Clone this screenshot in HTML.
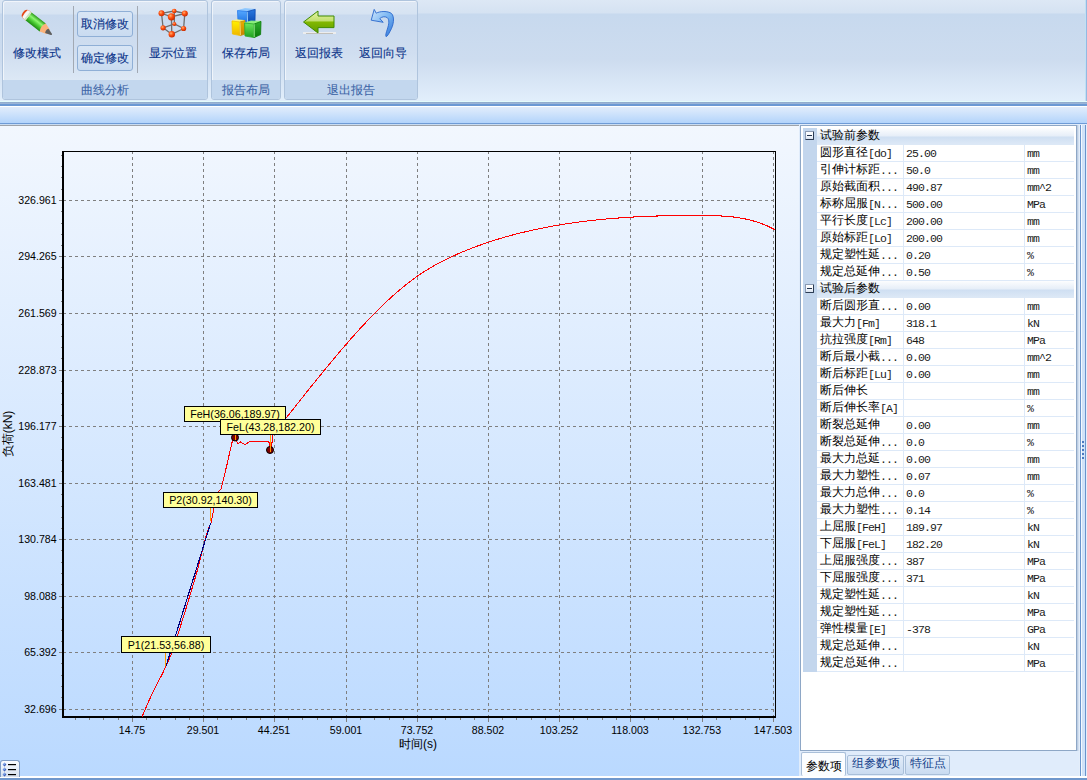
<!DOCTYPE html>
<html><head><meta charset="utf-8">
<style>
*{box-sizing:border-box}
html,body{margin:0;padding:0;width:1087px;height:780px;overflow:hidden;background:#dfe9f5;font-family:"Liberation Sans",sans-serif}
.abs{position:absolute}
#ribbon{left:0;top:0;width:1087px;height:101px;background:linear-gradient(#dde8f5 0px,#d5e2f2 13px,#c7d9ee 14px,#cddcef 60px,#e1eefb 100px)}
#ribbon:after{content:"";position:absolute;right:0;top:0;width:2px;height:101px;background:linear-gradient(90deg,#d8f4fb,#7fa5da)}
.grp{position:absolute;top:0px;height:100px;border:1px solid #afc4dd;border-radius:3px;box-shadow:inset 1px 1px 0 rgba(255,255,255,0.6);background:linear-gradient(#dde7f4 0px,#d6e3f2 13px,#c8d9ee 14px,#d0def0 52px,#dce8f5 79px)}
.grp .lbl{position:absolute;left:0;right:0;bottom:0;height:19px;background:#c3d7ee;border-radius:0 0 2px 2px;color:#3c64a6;font-size:12px;text-align:center;line-height:21px;-webkit-text-stroke:0.08px #3c64a6}
.btxt{position:absolute;color:#0d358a;font-size:12px;line-height:14px;white-space:nowrap;-webkit-text-stroke:0.12px #0d358a}
.sep{position:absolute;top:6px;width:1px;height:67px;background:#a2a9b3}
.sbtn{position:absolute;left:77px;width:56px;height:26px;border:1px solid #8fafd6;border-radius:3px;background:linear-gradient(#d9e6f5,#c9dbf0);color:#0d358a;font-size:12px;line-height:24px;text-align:center;-webkit-text-stroke:0.12px #0d358a}
#strip{left:0;top:101px;width:1087px;height:25px;background:linear-gradient(#e3fbfc 0px,#e3fbfc 1px,#8ea8c8 1px,#9fb9dd 3px,#6c99d4 3px,#6c99d4 5px,#ffffff 5px,#ffffff 6px,#e2edfc 6px,#b3d4fb 22px,#6e9bd6 22px,#6e9bd6 23px,#c9dcf2 23px)}
#chartbg{left:0;top:124px;width:799px;height:652px;border-top:1px solid #c9dcf2;box-shadow:inset 0 1px 0 #9ea3aa;background:linear-gradient(#f2f7fe 2px,#bad9ff)}
#bottom{left:0;top:776px;width:1087px;height:4px;background:linear-gradient(#ffffff 0px,#ffffff 2px,#6f97cc 2px)}
#rpanel{left:799px;top:124px;width:288px;height:652px;background:#e0ecfb}
#split{left:1077px;top:125px;width:10px;height:652px;background:linear-gradient(90deg,#e0ecfb 0,#e0ecfb 2px,#e4eefa 2px,#e4eefa 3px,#6a94cc 3px,#6a94cc 4px,#f4f9ff 4px,#f4f9ff 5px,#d0e2f8 5px,#d0e2f8 8px,#6a94cc 8px,#6a94cc 9px,#e4eefa 9px)}
#shad{left:1077px;top:125px;width:2px;height:626px;background:linear-gradient(90deg,#b2c4dc,#dde9f7)}
#grid{left:800px;top:125px;width:277px;height:626px;border:1px solid #8ea7c6;background:#fff}
.gutter{position:absolute;left:2px;top:2px;width:14px;height:544px;background:#c3d6ed}
.row{position:absolute;left:16px;width:257px;height:17px;border-bottom:1px solid #dde9f8;font-size:12px;line-height:15px;color:#000;white-space:nowrap}
.row .n{position:absolute;left:3px;top:0}
.row .v{position:absolute;left:86px;top:0;height:16px;border-left:1px solid #dde9f8;padding-left:2px;width:121px}
.row .u{position:absolute;left:207px;top:0;height:16px;border-left:1px solid #dde9f8;padding-left:2px;width:51px}
.cat{position:absolute;left:16px;width:257px;height:17px;font-size:12px;line-height:17px;background:linear-gradient(#fcfdfe,#e6eef8 8px,#cfdff2 9px,#dce8f6 16px)}
.cat span{position:absolute;left:3px;top:-1px}
.m{font-family:"Liberation Mono",monospace;font-size:11.5px;letter-spacing:-0.9px;color:#1a1a1a;position:relative;top:0.5px}
.tab{position:absolute;font-size:12px;line-height:18px;text-align:center;border:1px solid #a9bfd9;border-radius:2px}
.ex{position:absolute;left:-12px;top:3px;width:9px;height:9px;border:1px solid;border-color:#8a9ab2 #2c3c54 #2c3c54 #8a9ab2;border-radius:1px;background:linear-gradient(#ffffff,#f2f6fc 60%,#d8e2f0)}
.ex:after{content:"";position:absolute;left:1px;top:3px;width:5px;height:1px;background:#23344e}
</style></head><body>
<div id="ribbon" class="abs">
  <div class="grp" style="left:2px;width:206px"><div class="lbl">曲线分析</div></div>
  <div class="grp" style="left:211px;width:70px"><div class="lbl">报告布局</div></div>
  <div class="grp" style="left:284px;width:134px"><div class="lbl">退出报告</div></div>
  <div class="btxt" style="left:13px;top:46px">修改模式</div>
  <div class="sep" style="left:73px"></div>
  <div class="sbtn" style="top:11px">取消修改</div>
  <div class="sbtn" style="top:45px">确定修改</div>
  <div class="sep" style="left:137px"></div>
  <div class="btxt" style="left:149px;top:46px">显示位置</div>
  <div class="btxt" style="left:222px;top:46px">保存布局</div>
  <div class="btxt" style="left:295px;top:46px">返回报表</div>
  <div class="btxt" style="left:359px;top:46px">返回向导</div>
  <svg class="abs" style="left:0;top:0" width="420" height="42">
<defs>
 <linearGradient id="pg" x1="0" y1="0" x2="0" y2="1">
  <stop offset="0" stop-color="#2a9a1a"/><stop offset="0.35" stop-color="#8ef770"/><stop offset="0.6" stop-color="#52d23a"/><stop offset="1" stop-color="#1c8a10"/>
 </linearGradient>
 <radialGradient id="ball" cx="0.38" cy="0.35" r="0.7">
  <stop offset="0" stop-color="#ffb070"/><stop offset="0.45" stop-color="#ff5010"/><stop offset="1" stop-color="#c02800"/>
 </radialGradient>
 <linearGradient id="ag" x1="0" y1="0" x2="0" y2="1">
  <stop offset="0" stop-color="#e6f5a8"/><stop offset="0.45" stop-color="#c2e070"/><stop offset="0.5" stop-color="#82b800"/><stop offset="1" stop-color="#5e9c00"/>
 </linearGradient>
 <linearGradient id="ug" x1="0" y1="0" x2="1" y2="1">
  <stop offset="0" stop-color="#cfe6fc"/><stop offset="0.5" stop-color="#7ab6f2"/><stop offset="1" stop-color="#2c72d8"/>
 </linearGradient>
 <linearGradient id="bf" x1="0" y1="0" x2="0" y2="1"><stop offset="0" stop-color="#55a8ff"/><stop offset="1" stop-color="#1a6ee0"/></linearGradient>
 <linearGradient id="bs" x1="0" y1="0" x2="0" y2="1"><stop offset="0" stop-color="#2a78e0"/><stop offset="1" stop-color="#0a48b0"/></linearGradient>
 <linearGradient id="yf" x1="0" y1="0" x2="0" y2="1"><stop offset="0" stop-color="#fff200"/><stop offset="1" stop-color="#f0b400"/></linearGradient>
 <linearGradient id="ys" x1="0" y1="0" x2="0" y2="1"><stop offset="0" stop-color="#e8b000"/><stop offset="1" stop-color="#c88000"/></linearGradient>
 <linearGradient id="gf" x1="0" y1="0" x2="0" y2="1"><stop offset="0" stop-color="#6ee860"/><stop offset="1" stop-color="#1ea01e"/></linearGradient>
 <linearGradient id="gs" x1="0" y1="0" x2="0" y2="1"><stop offset="0" stop-color="#30b030"/><stop offset="1" stop-color="#087a08"/></linearGradient>
</defs>
<!-- pencil -->
<g transform="translate(25.8,14.3) rotate(38)">
 <rect x="3" y="-5" width="18.5" height="10" fill="url(#pg)"/>
 <path d="M21.5,-5 L28.5,-2.6 Q31.5,0 28.5,2.8 L21.5,5 Q18.8,0 21.5,-5 Z" fill="#fbb27a"/>
 <path d="M26.8,-2.6 L32.5,-0.8 Q34,0 32.5,1 L26.8,2.9 Q25,0 26.8,-2.6 Z" fill="#5e5e5e"/>
 <path d="M3.5,-5 L1,-5 Q-3.5,-5 -3.5,0 Q-3.5,5 1,5 L3.5,5 Z" fill="#e44a18"/>
 <path d="M-1,-4.6 L3.5,-5 L3.5,5 L-1,4.6 Q-2.2,0 -1,-4.6 Z" fill="#f6f6f6"/>
 <path d="M1.8,-5 L3.5,-5 L3.5,5 L1.8,5 Z" fill="#c8e8c0"/>
</g>
<!-- molecule cube -->
<g stroke="#6e6e6e" stroke-width="1.3" fill="none">
 <path d="M161.5,13.3 L174.2,11 L184.8,13.5 L171.4,16.8 Z"/>
 <path d="M161.5,13.3 L163.1,27.8 M184.8,13.5 L183.6,28.5 M171.4,16.8 L171.8,34.3 M174.2,11 L174.4,23.9"/>
 <path d="M163.1,27.8 L174.4,23.9 L183.6,28.5 L171.8,34.3 Z"/>
</g>
<g fill="url(#ball)">
 <circle cx="174.2" cy="11" r="2.3"/><circle cx="174.4" cy="23.9" r="2"/>
 <circle cx="161.5" cy="13.3" r="3"/><circle cx="184.8" cy="13.5" r="3"/>
 <circle cx="163.1" cy="27.8" r="2.6"/><circle cx="183.6" cy="28.5" r="2.6"/>
 <circle cx="171.4" cy="16.8" r="3.6"/><circle cx="171.8" cy="34.3" r="3.2"/>
</g>
<!-- blocks -->
<g stroke-linejoin="round">
 <path d="M237.5,10.6 L245,8.6 L255.2,9.4 L247.3,11.6 Z" fill="#8cc6ff" stroke="#8cc6ff" stroke-width="0.8"/>
 <path d="M237.5,10.6 L247.3,11.6 L247.6,23.9 L238,22.6 Z" fill="url(#bf)" stroke="#2a7ae8" stroke-width="0.8"/>
 <path d="M247.3,11.6 L255.2,9.4 L255,21.2 L247.6,23.9 Z" fill="url(#bs)" stroke="#0c48b0" stroke-width="0.8"/>
 <path d="M247.3,11.8 L247.6,23.6" stroke="#9fd2ff" stroke-width="0.9"/>
 <path d="M232,21 L237,19.8 L245,20.6 L240,22 Z" fill="#fff27a" stroke="#fff27a" stroke-width="0.8"/>
 <path d="M232,21 L240,22 L240.4,35.6 L232.4,34 Z" fill="url(#yf)" stroke="#f0c000" stroke-width="0.8"/>
 <path d="M240,22 L245,20.6 L245,34 L240.4,35.6 Z" fill="url(#ys)" stroke="#c88a00" stroke-width="0.8"/>
 <path d="M240,22.2 L240.4,35.2" stroke="#ffe98a" stroke-width="0.8"/>
 <path d="M244.6,23 L251,21 L261,21.4 L254.2,24 Z" fill="#8df07c" stroke="#8df07c" stroke-width="0.8"/>
 <path d="M244.6,23 L254.2,24 L254.2,37.6 L245,36 Z" fill="url(#gf)" stroke="#2aa82a" stroke-width="0.8"/>
 <path d="M254.2,24 L261,21.4 L260.6,34.6 L254.2,37.6 Z" fill="url(#gs)" stroke="#087808" stroke-width="0.8"/>
 <path d="M254.2,24.2 L254.2,37.2" stroke="#a6f59a" stroke-width="0.9"/>
</g>
<!-- back arrow -->
<rect x="303" y="32.2" width="33" height="1.6" fill="#f4f2ee"/>
<rect x="306" y="33.2" width="27" height="0.8" fill="#b8b4ae"/>
<path d="M303.5,22 L318,11 L318,16 L334,16 L334,27.6 L318,27.6 L318,33 Z" fill="url(#ag)" stroke="#3f8a00" stroke-width="1" stroke-linejoin="round"/>
<!-- undo arrow -->
<path d="M374.2,9.4 L376.2,13.2 C380,11 388,10.8 391.5,13.5 C394.8,17 393.8,25 390.2,31 C388.7,34 387.6,36.2 386,36.6 C385.4,35.6 386,33 387.4,29 C389,24 389.6,19.8 387.2,17.6 C384.8,16 381.6,16.8 379.8,18.6 L383.2,22.3 L371.2,20.2 Z" fill="url(#ug)" stroke="#2a68cc" stroke-width="0.9" stroke-linejoin="round"/>
</svg>

</div>
<div id="strip" class="abs"></div>
<div id="chartbg" class="abs"></div>
<div id="rpanel" class="abs"></div>
<div id="split" class="abs"></div>
<div id="shad" class="abs"></div>
<div id="grid" class="abs"><div class="gutter"></div>
<div class="cat" style="top:2px"><i class="ex"></i><span>试验前参数</span></div>
<div class="row" style="top:19px"><span class="n">圆形直径<span class="m">[do]</span></span><span class="v"><span class="m">25.00</span></span><span class="u"><span class="m">mm</span></span></div>
<div class="row" style="top:36px"><span class="n">引伸计标距<span class="m">...</span></span><span class="v"><span class="m">50.0</span></span><span class="u"><span class="m">mm</span></span></div>
<div class="row" style="top:53px"><span class="n">原始截面积<span class="m">...</span></span><span class="v"><span class="m">490.87</span></span><span class="u"><span class="m">mm^2</span></span></div>
<div class="row" style="top:70px"><span class="n">标称屈服<span class="m">[N...</span></span><span class="v"><span class="m">500.00</span></span><span class="u"><span class="m">MPa</span></span></div>
<div class="row" style="top:87px"><span class="n">平行长度<span class="m">[Lc]</span></span><span class="v"><span class="m">200.00</span></span><span class="u"><span class="m">mm</span></span></div>
<div class="row" style="top:104px"><span class="n">原始标距<span class="m">[Lo]</span></span><span class="v"><span class="m">200.00</span></span><span class="u"><span class="m">mm</span></span></div>
<div class="row" style="top:121px"><span class="n">规定塑性延<span class="m">...</span></span><span class="v"><span class="m">0.20</span></span><span class="u"><span class="m">%</span></span></div>
<div class="row" style="top:138px"><span class="n">规定总延伸<span class="m">...</span></span><span class="v"><span class="m">0.50</span></span><span class="u"><span class="m">%</span></span></div>
<div class="cat" style="top:155px"><i class="ex"></i><span>试验后参数</span></div>
<div class="row" style="top:172px"><span class="n">断后圆形直<span class="m">...</span></span><span class="v"><span class="m">0.00</span></span><span class="u"><span class="m">mm</span></span></div>
<div class="row" style="top:189px"><span class="n">最大力<span class="m">[Fm]</span></span><span class="v"><span class="m">318.1</span></span><span class="u"><span class="m">kN</span></span></div>
<div class="row" style="top:206px"><span class="n">抗拉强度<span class="m">[Rm]</span></span><span class="v"><span class="m">648</span></span><span class="u"><span class="m">MPa</span></span></div>
<div class="row" style="top:223px"><span class="n">断后最小截<span class="m">...</span></span><span class="v"><span class="m">0.00</span></span><span class="u"><span class="m">mm^2</span></span></div>
<div class="row" style="top:240px"><span class="n">断后标距<span class="m">[Lu]</span></span><span class="v"><span class="m">0.00</span></span><span class="u"><span class="m">mm</span></span></div>
<div class="row" style="top:257px"><span class="n">断后伸长</span><span class="v"></span><span class="u"><span class="m">mm</span></span></div>
<div class="row" style="top:274px"><span class="n">断后伸长率<span class="m">[A]</span></span><span class="v"></span><span class="u"><span class="m">%</span></span></div>
<div class="row" style="top:291px"><span class="n">断裂总延伸</span><span class="v"><span class="m">0.00</span></span><span class="u"><span class="m">mm</span></span></div>
<div class="row" style="top:308px"><span class="n">断裂总延伸<span class="m">...</span></span><span class="v"><span class="m">0.0</span></span><span class="u"><span class="m">%</span></span></div>
<div class="row" style="top:325px"><span class="n">最大力总延<span class="m">...</span></span><span class="v"><span class="m">0.00</span></span><span class="u"><span class="m">mm</span></span></div>
<div class="row" style="top:342px"><span class="n">最大力塑性<span class="m">...</span></span><span class="v"><span class="m">0.07</span></span><span class="u"><span class="m">mm</span></span></div>
<div class="row" style="top:359px"><span class="n">最大力总伸<span class="m">...</span></span><span class="v"><span class="m">0.0</span></span><span class="u"><span class="m">%</span></span></div>
<div class="row" style="top:376px"><span class="n">最大力塑性<span class="m">...</span></span><span class="v"><span class="m">0.14</span></span><span class="u"><span class="m">%</span></span></div>
<div class="row" style="top:393px"><span class="n">上屈服<span class="m">[FeH]</span></span><span class="v"><span class="m">189.97</span></span><span class="u"><span class="m">kN</span></span></div>
<div class="row" style="top:410px"><span class="n">下屈服<span class="m">[FeL]</span></span><span class="v"><span class="m">182.20</span></span><span class="u"><span class="m">kN</span></span></div>
<div class="row" style="top:427px"><span class="n">上屈服强度<span class="m">...</span></span><span class="v"><span class="m">387</span></span><span class="u"><span class="m">MPa</span></span></div>
<div class="row" style="top:444px"><span class="n">下屈服强度<span class="m">...</span></span><span class="v"><span class="m">371</span></span><span class="u"><span class="m">MPa</span></span></div>
<div class="row" style="top:461px"><span class="n">规定塑性延<span class="m">...</span></span><span class="v"></span><span class="u"><span class="m">kN</span></span></div>
<div class="row" style="top:478px"><span class="n">规定塑性延<span class="m">...</span></span><span class="v"></span><span class="u"><span class="m">MPa</span></span></div>
<div class="row" style="top:495px"><span class="n">弹性模量<span class="m">[E]</span></span><span class="v"><span class="m">-378</span></span><span class="u"><span class="m">GPa</span></span></div>
<div class="row" style="top:512px"><span class="n">规定总延伸<span class="m">...</span></span><span class="v"></span><span class="u"><span class="m">kN</span></span></div>
<div class="row" style="top:529px"><span class="n">规定总延伸<span class="m">...</span></span><span class="v"></span><span class="u"><span class="m">MPa</span></span></div>
</div>
<div class="tab" style="left:801px;top:752px;width:45px;height:24px;background:#fbfdff;border-bottom:none;line-height:26px;color:#000">参数项</div>
<div class="tab" style="left:847px;top:755px;width:57px;height:20px;background:linear-gradient(#e3edf9,#c9dbf1);color:#15428b;line-height:14px">组参数项</div>
<div class="tab" style="left:905px;top:755px;width:45px;height:20px;background:linear-gradient(#e3edf9,#c9dbf1);color:#15428b;line-height:14px">特征点</div>
<svg class="abs" style="left:0;top:0" width="1087" height="780">
<defs></defs>
<g stroke="#7f7f7f" stroke-width="1" stroke-dasharray="3,3" shape-rendering="crispEdges"><line x1="63" y1="200.5" x2="775" y2="200.5"/><line x1="63" y1="256.5" x2="775" y2="256.5"/><line x1="63" y1="313.5" x2="775" y2="313.5"/><line x1="63" y1="370.5" x2="775" y2="370.5"/><line x1="63" y1="426.5" x2="775" y2="426.5"/><line x1="63" y1="483.5" x2="775" y2="483.5"/><line x1="63" y1="539.5" x2="775" y2="539.5"/><line x1="63" y1="596.5" x2="775" y2="596.5"/><line x1="63" y1="652.5" x2="775" y2="652.5"/><line x1="63" y1="709.5" x2="775" y2="709.5"/><line x1="132.5" y1="151" x2="132.5" y2="716"/><line x1="203.5" y1="151" x2="203.5" y2="716"/><line x1="274.5" y1="151" x2="274.5" y2="716"/><line x1="346.5" y1="151" x2="346.5" y2="716"/><line x1="417.5" y1="151" x2="417.5" y2="716"/><line x1="488.5" y1="151" x2="488.5" y2="716"/><line x1="559.5" y1="151" x2="559.5" y2="716"/><line x1="630.5" y1="151" x2="630.5" y2="716"/><line x1="702.5" y1="151" x2="702.5" y2="716"/><line x1="773.5" y1="151" x2="773.5" y2="716"/></g>
<g stroke="#7f7f7f" stroke-width="1" shape-rendering="crispEdges"><line x1="61" y1="211.5" x2="64" y2="211.5"/><line x1="61" y1="223.5" x2="64" y2="223.5"/><line x1="61" y1="234.5" x2="64" y2="234.5"/><line x1="61" y1="245.5" x2="64" y2="245.5"/><line x1="61" y1="267.5" x2="64" y2="267.5"/><line x1="61" y1="279.5" x2="64" y2="279.5"/><line x1="61" y1="290.5" x2="64" y2="290.5"/><line x1="61" y1="301.5" x2="64" y2="301.5"/><line x1="61" y1="324.5" x2="64" y2="324.5"/><line x1="61" y1="336.5" x2="64" y2="336.5"/><line x1="61" y1="347.5" x2="64" y2="347.5"/><line x1="61" y1="358.5" x2="64" y2="358.5"/><line x1="61" y1="381.5" x2="64" y2="381.5"/><line x1="61" y1="393.5" x2="64" y2="393.5"/><line x1="61" y1="404.5" x2="64" y2="404.5"/><line x1="61" y1="415.5" x2="64" y2="415.5"/><line x1="61" y1="437.5" x2="64" y2="437.5"/><line x1="61" y1="449.5" x2="64" y2="449.5"/><line x1="61" y1="460.5" x2="64" y2="460.5"/><line x1="61" y1="471.5" x2="64" y2="471.5"/><line x1="61" y1="494.5" x2="64" y2="494.5"/><line x1="61" y1="506.5" x2="64" y2="506.5"/><line x1="61" y1="517.5" x2="64" y2="517.5"/><line x1="61" y1="528.5" x2="64" y2="528.5"/><line x1="61" y1="550.5" x2="64" y2="550.5"/><line x1="61" y1="562.5" x2="64" y2="562.5"/><line x1="61" y1="573.5" x2="64" y2="573.5"/><line x1="61" y1="584.5" x2="64" y2="584.5"/><line x1="61" y1="607.5" x2="64" y2="607.5"/><line x1="61" y1="619.5" x2="64" y2="619.5"/><line x1="61" y1="630.5" x2="64" y2="630.5"/><line x1="61" y1="641.5" x2="64" y2="641.5"/><line x1="61" y1="663.5" x2="64" y2="663.5"/><line x1="61" y1="675.5" x2="64" y2="675.5"/><line x1="61" y1="686.5" x2="64" y2="686.5"/><line x1="61" y1="697.5" x2="64" y2="697.5"/><line x1="61" y1="189.5" x2="64" y2="189.5"/><line x1="61" y1="177.5" x2="64" y2="177.5"/><line x1="61" y1="166.5" x2="64" y2="166.5"/><line x1="61" y1="155.5" x2="64" y2="155.5"/><line x1="132.5" y1="716" x2="132.5" y2="722"/><line x1="146.5" y1="716" x2="146.5" y2="720"/><line x1="160.5" y1="716" x2="160.5" y2="720"/><line x1="175.5" y1="716" x2="175.5" y2="720"/><line x1="189.5" y1="716" x2="189.5" y2="720"/><line x1="203.5" y1="716" x2="203.5" y2="722"/><line x1="217.5" y1="716" x2="217.5" y2="720"/><line x1="231.5" y1="716" x2="231.5" y2="720"/><line x1="246.5" y1="716" x2="246.5" y2="720"/><line x1="260.5" y1="716" x2="260.5" y2="720"/><line x1="274.5" y1="716" x2="274.5" y2="722"/><line x1="288.5" y1="716" x2="288.5" y2="720"/><line x1="302.5" y1="716" x2="302.5" y2="720"/><line x1="317.5" y1="716" x2="317.5" y2="720"/><line x1="331.5" y1="716" x2="331.5" y2="720"/><line x1="346.5" y1="716" x2="346.5" y2="722"/><line x1="360.5" y1="716" x2="360.5" y2="720"/><line x1="374.5" y1="716" x2="374.5" y2="720"/><line x1="389.5" y1="716" x2="389.5" y2="720"/><line x1="403.5" y1="716" x2="403.5" y2="720"/><line x1="417.5" y1="716" x2="417.5" y2="722"/><line x1="431.5" y1="716" x2="431.5" y2="720"/><line x1="445.5" y1="716" x2="445.5" y2="720"/><line x1="460.5" y1="716" x2="460.5" y2="720"/><line x1="474.5" y1="716" x2="474.5" y2="720"/><line x1="488.5" y1="716" x2="488.5" y2="722"/><line x1="502.5" y1="716" x2="502.5" y2="720"/><line x1="516.5" y1="716" x2="516.5" y2="720"/><line x1="531.5" y1="716" x2="531.5" y2="720"/><line x1="545.5" y1="716" x2="545.5" y2="720"/><line x1="559.5" y1="716" x2="559.5" y2="722"/><line x1="573.5" y1="716" x2="573.5" y2="720"/><line x1="587.5" y1="716" x2="587.5" y2="720"/><line x1="602.5" y1="716" x2="602.5" y2="720"/><line x1="616.5" y1="716" x2="616.5" y2="720"/><line x1="630.5" y1="716" x2="630.5" y2="722"/><line x1="644.5" y1="716" x2="644.5" y2="720"/><line x1="658.5" y1="716" x2="658.5" y2="720"/><line x1="673.5" y1="716" x2="673.5" y2="720"/><line x1="687.5" y1="716" x2="687.5" y2="720"/><line x1="702.5" y1="716" x2="702.5" y2="722"/><line x1="716.5" y1="716" x2="716.5" y2="720"/><line x1="730.5" y1="716" x2="730.5" y2="720"/><line x1="745.5" y1="716" x2="745.5" y2="720"/><line x1="759.5" y1="716" x2="759.5" y2="720"/><line x1="773.5" y1="716" x2="773.5" y2="722"/><line x1="118.5" y1="716" x2="118.5" y2="720"/><line x1="103.5" y1="716" x2="103.5" y2="720"/><line x1="89.5" y1="716" x2="89.5" y2="720"/><line x1="75.5" y1="716" x2="75.5" y2="720"/><line x1="59" y1="200.5" x2="62" y2="200.5"/><line x1="59" y1="256.5" x2="62" y2="256.5"/><line x1="59" y1="313.5" x2="62" y2="313.5"/><line x1="59" y1="370.5" x2="62" y2="370.5"/><line x1="59" y1="426.5" x2="62" y2="426.5"/><line x1="59" y1="483.5" x2="62" y2="483.5"/><line x1="59" y1="539.5" x2="62" y2="539.5"/><line x1="59" y1="596.5" x2="62" y2="596.5"/><line x1="59" y1="652.5" x2="62" y2="652.5"/><line x1="59" y1="709.5" x2="62" y2="709.5"/></g>
<g fill="#000" shape-rendering="crispEdges"><rect x="62" y="151" width="714" height="1"/><rect x="775" y="151" width="1" height="567"/><rect x="62" y="151" width="2" height="567"/><rect x="62" y="716" width="714" height="2"/></g>
<g font-family="Liberation Sans" font-size="10.6" fill="#000"><text x="56.6" y="204.0" text-anchor="end">326.961</text><text x="56.6" y="260.0" text-anchor="end">294.265</text><text x="56.6" y="317.0" text-anchor="end">261.569</text><text x="56.6" y="374.0" text-anchor="end">228.873</text><text x="56.6" y="430.0" text-anchor="end">196.177</text><text x="56.6" y="487.0" text-anchor="end">163.481</text><text x="56.6" y="543.0" text-anchor="end">130.784</text><text x="56.6" y="600.0" text-anchor="end">98.088</text><text x="56.6" y="656.0" text-anchor="end">65.392</text><text x="56.6" y="713.0" text-anchor="end">32.696</text><text x="132" y="733.6" text-anchor="middle">14.75</text><text x="203" y="733.6" text-anchor="middle">29.501</text><text x="274" y="733.6" text-anchor="middle">44.251</text><text x="346" y="733.6" text-anchor="middle">59.001</text><text x="417" y="733.6" text-anchor="middle">73.752</text><text x="488" y="733.6" text-anchor="middle">88.502</text><text x="559" y="733.6" text-anchor="middle">103.252</text><text x="630" y="733.6" text-anchor="middle">118.003</text><text x="702" y="733.6" text-anchor="middle">132.753</text><text x="773" y="733.6" text-anchor="middle">147.503</text></g>
<text x="418" y="748" text-anchor="middle" font-family="Liberation Sans" font-size="12" fill="#000">时间(s)</text>
<text transform="translate(12,434) rotate(-90)" text-anchor="middle" font-family="Liberation Sans" font-size="12" fill="#000">负荷(kN)</text>
<path fill="none" stroke="#ff0000" stroke-width="1.05" shape-rendering="crispEdges" d="M142.2,716.5 C143.63,713.20 148.17,702.40 150.80,696.70 C153.43,691.00 155.62,687.08 158.00,682.30 C160.38,677.52 162.73,673.08 165.10,668.00 C167.47,662.92 169.85,658.08 172.20,651.80 C174.55,645.52 176.37,639.27 179.20,630.30 C182.03,621.33 186.07,608.38 189.20,598.00 C192.33,587.62 195.12,578.57 198.00,568.00 C200.88,557.43 204.30,542.17 206.50,534.60 C208.70,527.03 210.42,524.60 211.20,522.60 L214.4,505.2 L218.8,491 L221,488.8 C221.90,485.17 224.58,474.63 226.40,467.00 C228.22,459.37 230.73,447.72 231.90,443.00 C233.07,438.28 232.88,439.60 233.40,438.70 C233.92,437.80 234.73,437.78 235.00,437.60 L238,444 L240.4,442 L245,444.5 L250,441.5 L268.8,441.5 L270,448 L271.5,448 L272.7,435 L272.7,434.97 L275.2,431.81 L277.7,428.65 L280.2,425.49 L282.7,422.33 L285.2,419.17 L287.7,416.01 L290.2,412.85 L292.7,409.70 L295.2,406.54 L297.7,403.40 L300.2,400.25 L302.7,397.11 L305.2,393.98 L307.7,390.85 L310.2,387.73 L312.7,384.62 L315.2,381.52 L317.7,378.42 L320.2,375.34 L322.7,372.27 L325.2,369.21 L327.7,366.17 L330.2,363.14 L332.7,360.13 L335.2,357.14 L337.7,354.17 L340.2,351.21 L342.7,348.28 L345.2,345.38 L347.7,342.49 L350.2,339.64 L352.7,336.80 L355.2,334.00 L357.7,331.23 L360.2,328.48 L362.7,325.76 L365.2,323.08 L367.7,320.43 L370.2,317.81 L372.7,315.23 L375.2,312.69 L377.7,310.18 L380.2,307.71 L382.7,305.28 L385.2,302.89 L387.7,300.54 L390.2,298.23 L392.7,295.97 L395.2,293.75 L397.7,291.58 L400.2,289.45 L402.7,287.37 L405.2,285.34 L407.7,283.37 L410.2,281.44 L412.7,279.56 L415.2,277.74 L417.7,275.97 L420.2,274.26 L422.7,272.60 L425.2,271.00 L427.7,269.44 L430.2,267.93 L432.7,266.47 L435.2,265.05 L437.7,263.68 L440.2,262.34 L442.7,261.05 L445.2,259.79 L447.7,258.56 L450.2,257.37 L452.7,256.21 L455.2,255.08 L457.7,253.98 L460.2,252.90 L462.7,251.85 L465.2,250.82 L467.7,249.81 L470.2,248.82 L472.7,247.85 L475.2,246.91 L477.7,245.98 L480.2,245.07 L482.7,244.19 L485.2,243.32 L487.7,242.47 L490.2,241.64 L492.7,240.83 L495.2,240.03 L497.7,239.26 L500.2,238.50 L502.7,237.76 L505.2,237.03 L507.7,236.33 L510.2,235.64 L512.7,234.96 L515.2,234.30 L517.7,233.66 L520.2,233.03 L522.7,232.42 L525.2,231.82 L527.7,231.24 L530.2,230.67 L532.7,230.11 L535.2,229.57 L537.7,229.04 L540.2,228.52 L542.7,228.02 L545.2,227.53 L547.7,227.05 L550.2,226.58 L552.7,226.12 L555.2,225.68 L557.7,225.25 L560.2,224.83 L562.7,224.42 L565.2,224.02 L567.7,223.64 L570.2,223.26 L572.7,222.90 L575.2,222.54 L577.7,222.20 L580.2,221.87 L582.7,221.54 L585.2,221.23 L587.7,220.93 L590.2,220.64 L592.7,220.35 L595.2,220.08 L597.7,219.82 L600.2,219.56 L602.7,219.32 L605.2,219.08 L607.7,218.86 L610.2,218.64 L612.7,218.43 L615.2,218.23 L617.7,218.04 L620.2,217.85 L622.7,217.68 L625.2,217.51 L627.7,217.35 L630.2,217.20 L632.7,217.05 L635.2,216.91 L637.7,216.78 L640.2,216.66 L642.7,216.55 L645.2,216.44 L647.7,216.33 L650.2,216.24 L652.7,216.15 L655.2,216.07 L657.7,215.99 L660.2,215.92 L662.7,215.85 L665.2,215.79 L667.7,215.74 L670.2,215.69 L672.7,215.65 L675.2,215.61 L677.7,215.58 L680.2,215.55 L682.7,215.53 L685.2,215.51 L687.7,215.50 L690.2,215.49 L692.7,215.48 L695.2,215.48 L697.7,215.48 L700.2,215.49 L702.7,215.50 L705.2,215.52 L707.7,215.55 L710.2,215.59 L712.7,215.64 L715.2,215.71 L717.7,215.81 L720.2,215.92 L722.7,216.06 L725.2,216.23 L727.7,216.43 L730.2,216.67 L732.7,216.94 L735.2,217.25 L737.7,217.61 L740.2,218.00 L742.7,218.45 L745.2,218.95 L747.7,219.50 L750.2,220.10 L752.7,220.77 L755.2,221.49 L757.7,222.29 L760.2,223.14 L762.7,224.07 L765.2,225.07 L767.7,226.14 L770.2,227.30 L772.7,228.53 L774.9,229.68"/>
<line x1="166" y1="666.2" x2="210.7" y2="523" stroke="#000080" stroke-width="1.1" shape-rendering="crispEdges"/>
<g stroke="#ff9900" stroke-width="1" shape-rendering="crispEdges"><line x1="165.5" y1="652" x2="165.5" y2="666"/><line x1="210.5" y1="508" x2="210.5" y2="521"/><line x1="235.5" y1="422" x2="235.5" y2="437"/><line x1="270.5" y1="435" x2="270.5" y2="450"/></g>
<g fill="#800000" stroke="#000" stroke-width="1"><circle cx="235" cy="437.5" r="3.5"/><circle cx="270" cy="450" r="3.5"/></g>
<g stroke="#ff9900" stroke-width="1" shape-rendering="crispEdges"><line x1="235.5" y1="434" x2="235.5" y2="440"/><line x1="270.5" y1="446" x2="270.5" y2="452"/></g>
<rect x="121.5" y="636.5" width="89" height="16" fill="#ffff99" stroke="#000" stroke-width="1" shape-rendering="crispEdges"/><text x="166.0" y="648.5" text-anchor="middle" font-family="Liberation Sans" font-size="10.7" fill="#000">P1(21.53,56.88)</text>
<rect x="163.5" y="492.5" width="94" height="15" fill="#ffff99" stroke="#000" stroke-width="1" shape-rendering="crispEdges"/><text x="210.5" y="503.5" text-anchor="middle" font-family="Liberation Sans" font-size="10.7" fill="#000">P2(30.92,140.30)</text>
<rect x="184.5" y="406.5" width="101" height="15" fill="#ffff99" stroke="#000" stroke-width="1" shape-rendering="crispEdges"/><text x="235.0" y="417.5" text-anchor="middle" font-family="Liberation Sans" font-size="10.7" fill="#000">FeH(36.06,189.97)</text>
<rect x="220.5" y="419.5" width="100" height="15" fill="#ffff99" stroke="#000" stroke-width="1" shape-rendering="crispEdges"/><text x="270.5" y="430.5" text-anchor="middle" font-family="Liberation Sans" font-size="10.7" fill="#000">FeL(43.28,182.20)</text>
</svg>
<div id="bottom" class="abs"></div>
<div class="abs" style="left:0;top:760px;width:20px;height:17px;border:1px solid #7f9cc4;border-bottom:none;border-radius:3px 3px 0 0;background:linear-gradient(#fafcff,#e6eef8 50%,#d8e2ee)"></div>
<svg class="abs" style="left:0;top:760px" width="20" height="17">
<defs><radialGradient id="dot" cx="0.4" cy="0.35" r="0.6"><stop offset="0" stop-color="#9cc4ff"/><stop offset="1" stop-color="#1a3aa0"/></radialGradient></defs>
<g fill="url(#dot)"><path d="M4.5,2.6 L6.4,4.5 L4.5,6.4 L2.6,4.5Z"/><path d="M4.5,7.6 L6.4,9.5 L4.5,11.4 L2.6,9.5Z"/><path d="M4.5,12.6 L6.4,14.5 L4.5,16.4 L2.6,14.5Z"/></g>
<g fill="#000"><rect x="8" y="4" width="8" height="1.2"/><rect x="8" y="9" width="8" height="1.2"/><rect x="8" y="14" width="8" height="1.2"/></g>
<g fill="#5a86c8"><rect x="1082" y="0" width="0" height="0"/></g>
</svg>
<svg class="abs" style="left:1081px;top:440px" width="5" height="22"><g fill="#4a78c0"><rect x="1" y="1" width="2" height="2"/><rect x="1" y="5" width="2" height="2"/><rect x="1" y="9" width="2" height="2"/><rect x="1" y="13" width="2" height="2"/><rect x="1" y="17" width="2" height="2"/></g></svg>
</body></html>
